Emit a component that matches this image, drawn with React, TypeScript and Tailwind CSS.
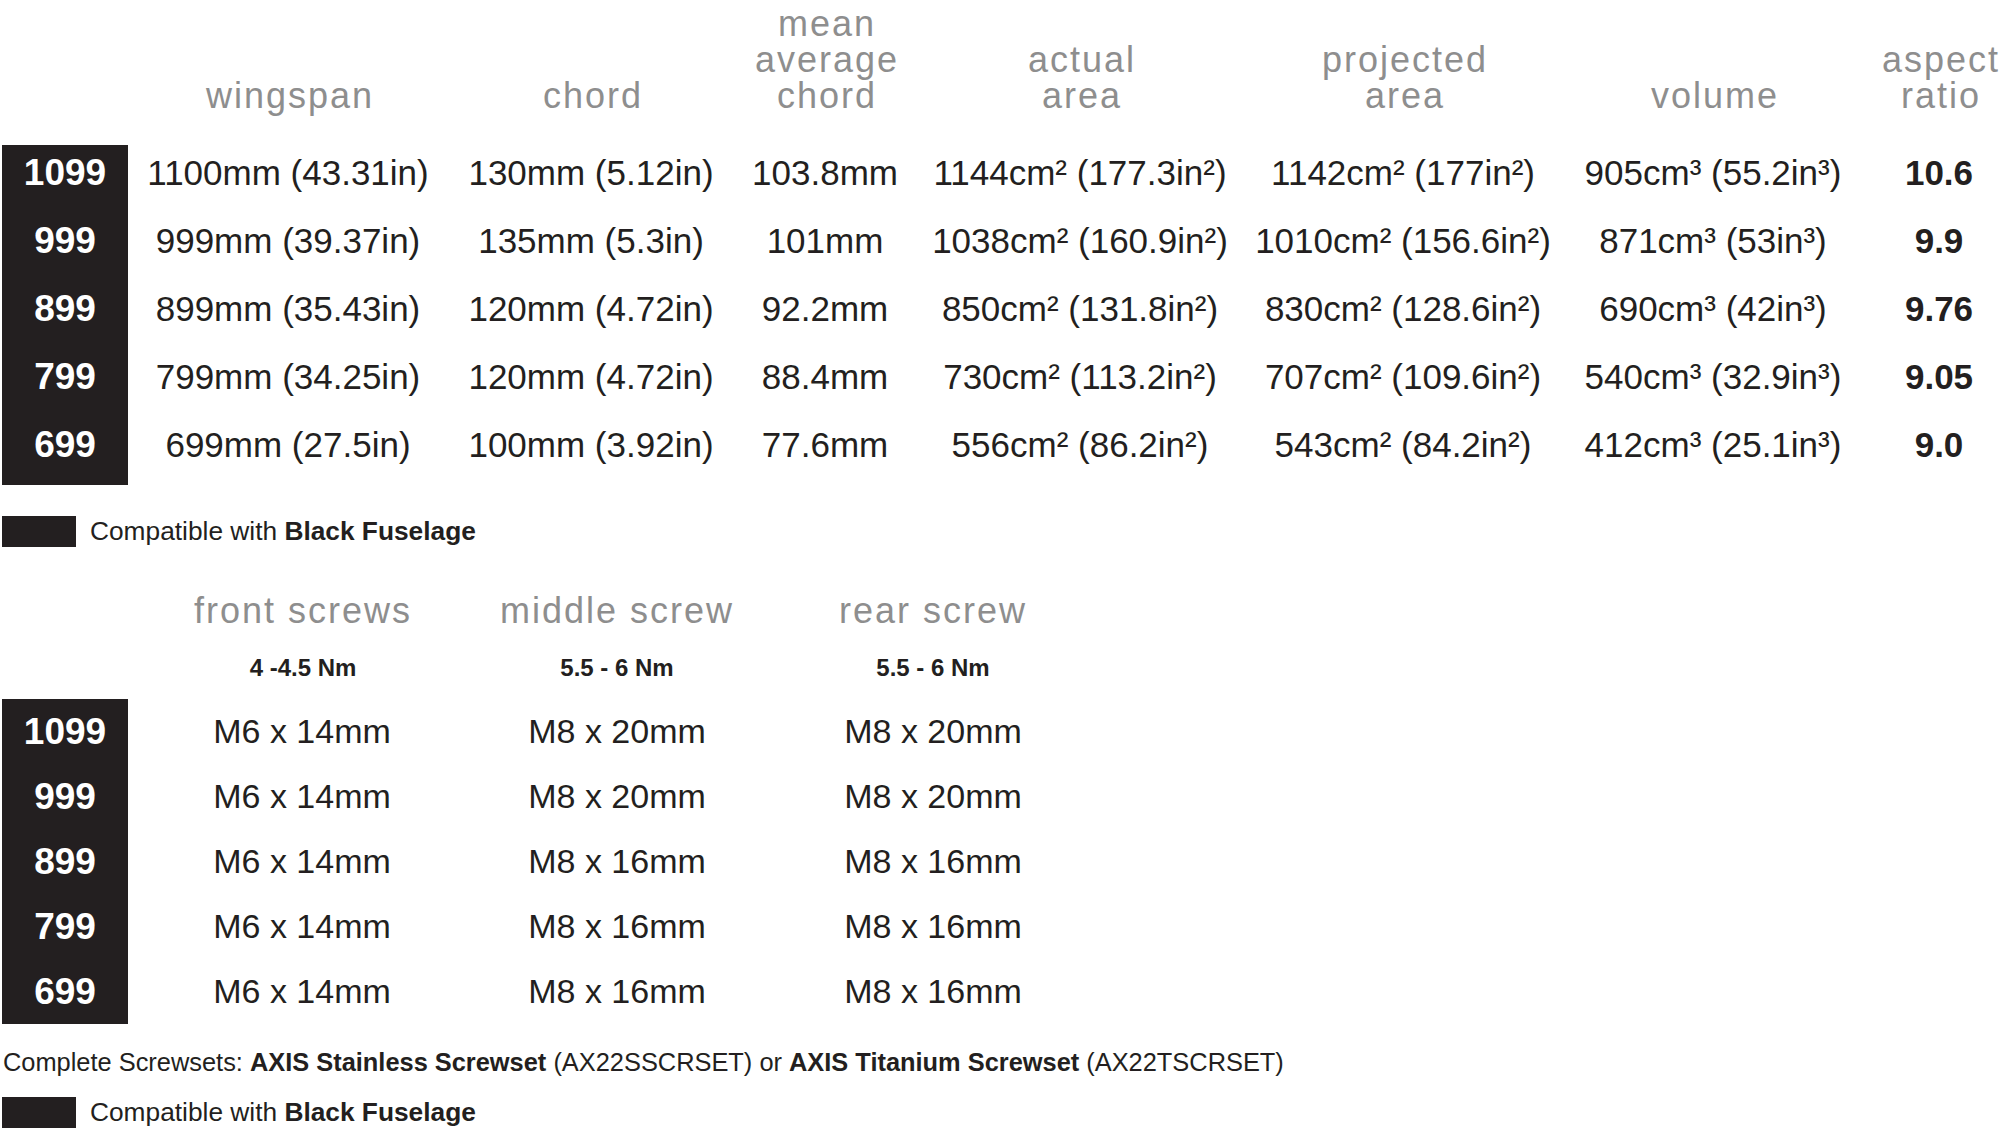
const wings = [
  { size: '1099', span: '1100mm (43.31in)', chord: '130mm (5.12in)', mac: '103.8mm', actual: '1144cm² (177.3in²)', proj: '1142cm² (177in²)', vol: '905cm³ (55.2in³)', ar: '10.6' },
  { size: '999', span: '999mm (39.37in)', chord: '135mm (5.3in)', mac: '101mm', actual: '1038cm² (160.9in²)', proj: '1010cm² (156.6in²)', vol: '871cm³ (53in³)', ar: '9.9' },
  { size: '899', span: '899mm (35.43in)', chord: '120mm (4.72in)', mac: '92.2mm', actual: '850cm² (131.8in²)', proj: '830cm² (128.6in²)', vol: '690cm³ (42in³)', ar: '9.76' },
  { size: '799', span: '799mm (34.25in)', chord: '120mm (4.72in)', mac: '88.4mm', actual: '730cm² (113.2in²)', proj: '707cm² (109.6in²)', vol: '540cm³ (32.9in³)', ar: '9.05' },
  { size: '699', span: '699mm (27.5in)', chord: '100mm (3.92in)', mac: '77.6mm', actual: '556cm² (86.2in²)', proj: '543cm² (84.2in²)', vol: '412cm³ (25.1in³)', ar: '9.0' },
]

const screws = [
  { size: '1099', front: 'M6 x 14mm', middle: 'M8 x 20mm', rear: 'M8 x 20mm' },
  { size: '999', front: 'M6 x 14mm', middle: 'M8 x 20mm', rear: 'M8 x 20mm' },
  { size: '899', front: 'M6 x 14mm', middle: 'M8 x 16mm', rear: 'M8 x 16mm' },
  { size: '799', front: 'M6 x 14mm', middle: 'M8 x 16mm', rear: 'M8 x 16mm' },
  { size: '699', front: 'M6 x 14mm', middle: 'M8 x 16mm', rear: 'M8 x 16mm' },
]

const head = 'text-[36px] leading-[36px] tracking-[2px] text-[#8e8e8e] text-center whitespace-nowrap'
const cell = 'h-[68px] pb-[12px] flex items-center justify-center whitespace-nowrap'

function Compatible() {
  return (
    <div className="flex items-center gap-[14px] pl-[2px] h-[31px]">
      <div className="w-[74px] h-[31px] bg-[#231f20]" />
      <span className="text-[26.3px] leading-[31px] text-[#231f20] whitespace-nowrap">
        Compatible with <b>Black Fuselage</b>
      </span>
    </div>
  )
}

export default function App() {
  return (
    <div className="w-[2000px] h-[1136px] overflow-hidden bg-white text-[#231f20] font-['Liberation_Sans',Arial,sans-serif]">
      {/* wing specs */}
      <div className="grid grid-cols-[128px_320px_286px_182px_328px_318px_302px_150px] items-end pt-[6px] pl-[2px]">
        <div />
        <div className={head}>wingspan</div>
        <div className={head}>chord</div>
        <div className={head}>mean<br />average<br />chord</div>
        <div className={head}>actual<br />area</div>
        <div className={head}>projected<br />area</div>
        <div className={head}>volume</div>
        <div className={head}>aspect<br />ratio</div>
      </div>

      <div className="mt-[31px] grid grid-cols-[126px_320px_286px_182px_328px_318px_302px_150px] pl-[2px] text-[35px]">
        {wings.map(w => (
          <div key={w.size} className="contents">
            <div className={`${cell} bg-[#231f20] text-white font-bold text-[37px]`}>{w.size}</div>
            <div className={cell}>{w.span}</div>
            <div className={cell}>{w.chord}</div>
            <div className={cell}>{w.mac}</div>
            <div className={cell}>{w.actual}</div>
            <div className={cell}>{w.proj}</div>
            <div className={cell}>{w.vol}</div>
            <div className={`${cell} font-bold`}>{w.ar}</div>
          </div>
        ))}
      </div>

      <div className="mt-[31px]">
        <Compatible />
      </div>

      {/* screws */}
      <div className="mt-[46px] grid grid-cols-[128px_346px_282px_350px] pl-[2px]">
        <div />
        <div className={head}>front screws</div>
        <div className={head}>middle screw</div>
        <div className={head}>rear screw</div>
      </div>
      <div className="mt-[25px] grid grid-cols-[128px_346px_282px_350px] pl-[2px] text-[24px] leading-[28px] font-bold text-center">
        <div />
        <div>4 -4.5 Nm</div>
        <div>5.5 - 6 Nm</div>
        <div>5.5 - 6 Nm</div>
      </div>

      <div className="mt-[17px] grid grid-cols-[126px_348px_282px_350px] pl-[2px] text-[34px]">
        {screws.map(s => (
          <div key={s.size} className="contents">
            <div className="h-[65px] flex items-center justify-center bg-[#231f20] text-white font-bold text-[37px]">{s.size}</div>
            <div className="h-[65px] flex items-center justify-center whitespace-nowrap">{s.front}</div>
            <div className="h-[65px] flex items-center justify-center whitespace-nowrap">{s.middle}</div>
            <div className="h-[65px] flex items-center justify-center whitespace-nowrap">{s.rear}</div>
          </div>
        ))}
      </div>

      <div className="mt-[23px] pl-[3px] text-[25.4px] leading-[30px] whitespace-nowrap">
        Complete Screwsets: <b>AXIS Stainless Screwset</b> (AX22SSCRSET) or <b>AXIS Titanium Screwset</b> (AX22TSCRSET)
      </div>

      <div className="mt-[20px]">
        <Compatible />
      </div>
    </div>
  )
}
